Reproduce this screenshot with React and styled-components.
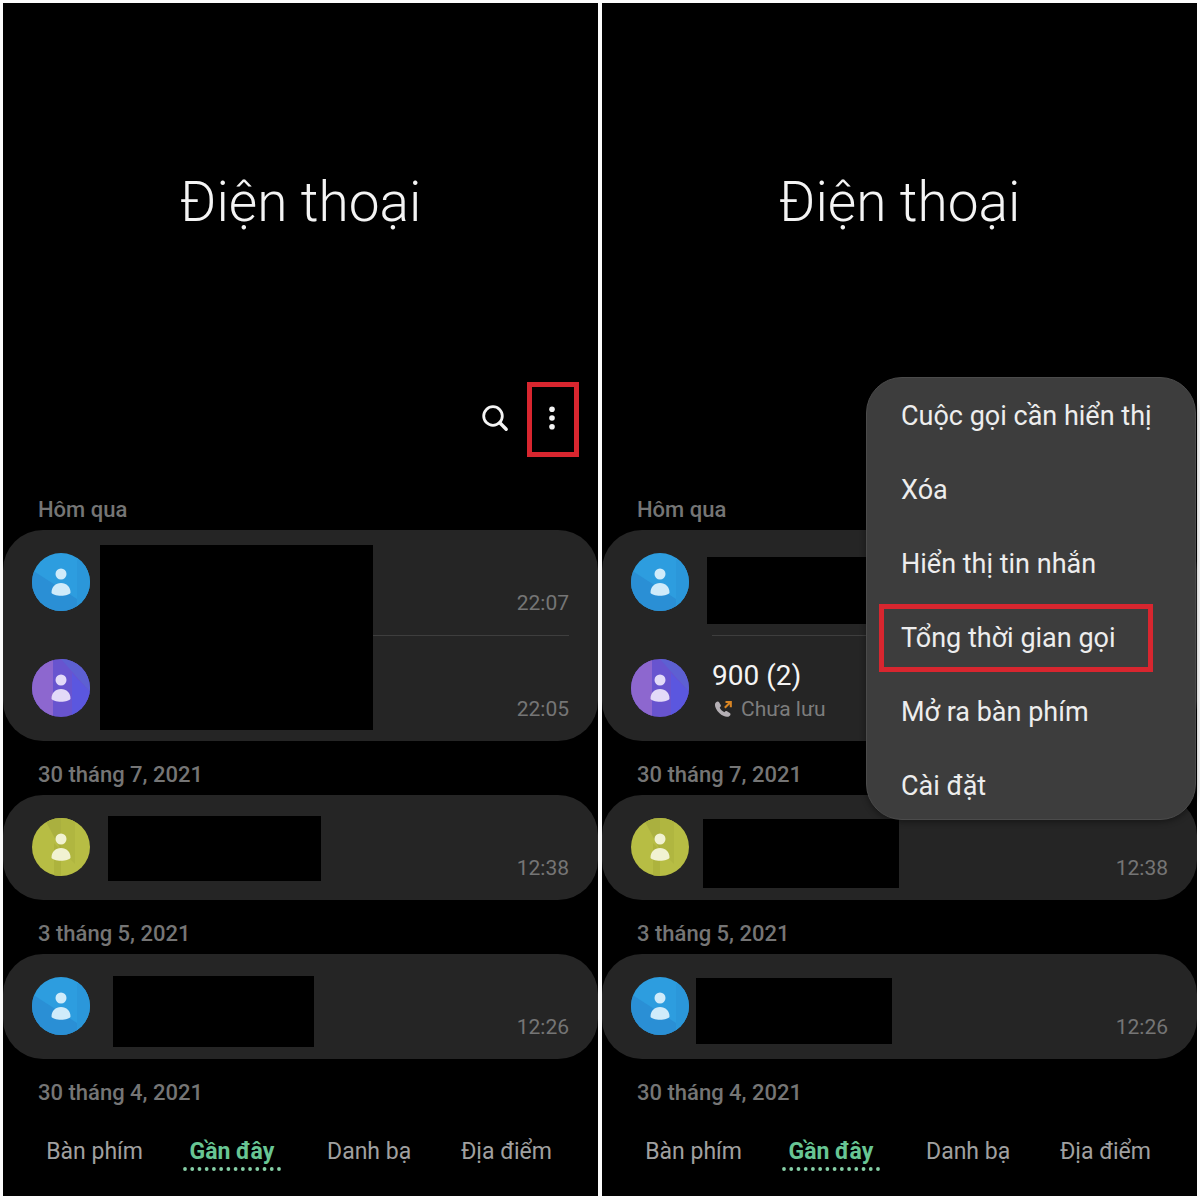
import React from "react";
import styled, { createGlobalStyle, css } from "styled-components";

const GlobalStyle = createGlobalStyle`
  *, *::before, *::after { box-sizing: border-box; }
  body {
    margin: 0;
    background: #fbfbfb;
    font-family: Roboto, "Noto Sans", sans-serif;
  }
  button { font: inherit; color: inherit; background: none; border: 0; padding: 0; cursor: pointer; }
  h1, h2, ul { margin: 0; padding: 0; font-weight: inherit; list-style: none; }
`;

const Comparison = styled.main`
  display: grid;
  grid-template-columns: 1fr 1fr;
  gap: 4px;
  padding: 3px;
`;

const Phone = styled.section`
  position: relative;
  min-width: 0;
  background: #000;
  color: #f4f4f4;
`;

const Title = styled.h1`
  padding-top: 166px;
  font-size: 55px;
  line-height: 66px;
  font-weight: 300;
  text-align: center;
`;

const Toolbar = styled.div`
  display: flex;
  justify-content: flex-end;
  gap: 6px;
  margin-top: 147px;
  padding: 0 19px 19px;
`;

const ToolButton = styled.button`
  display: grid;
  place-items: center;
  width: 52px;
  height: 75px;
  border: 5px solid ${(p) => (p.$marked ? "#d8262f" : "transparent")};
`;

const DateLabel = styled.h2`
  padding: 20px 35px 6px;
  font-size: 22px;
  line-height: 28px;
  font-weight: 500;
  color: #757575;
`;

const Card = styled.ul`
  position: relative;
  border-radius: 40px;
  background: #252525;
`;

const Row = styled.li`
  display: flex;
  align-items: flex-end;
  height: 105px;
  padding: 0 29px 19px;
  gap: 23px;
`;

const Divider = styled.li`
  height: 1px;
  margin: 0 29px 0 110px;
  background: #3e3e3e;
`;

const AvatarArt = styled.svg`
  flex: none;
  width: 58px;
  height: 58px;
  margin-bottom: 5px;
`;

const Name = styled.div`
  font-size: 28px;
  line-height: 34px;
  margin-bottom: 3px;
`;

const Detail = styled.div`
  display: flex;
  align-items: center;
  gap: 8px;
  padding-left: 2px;
  font-size: 21px;
  line-height: 26px;
  color: #7d7d7d;
`;

const Time = styled.time`
  margin-left: auto;
  font-size: 21px;
  line-height: 26px;
  color: #757575;
`;

const Redaction = styled.li`
  position: absolute;
  left: ${(p) => p.$x}px;
  top: ${(p) => p.$y}px;
  width: ${(p) => p.$w}px;
  height: ${(p) => p.$h}px;
  background: #000;
`;

const Tabs = styled.nav`
  display: grid;
  grid-template-columns: repeat(4, 1fr);
  padding: 24px 23px 25px;
`;

const Tab = styled.button`
  display: flex;
  flex-direction: column;
  align-items: center;
  height: 34px;
  font-size: 23px;
  line-height: 30px;
  color: #a0a0a0;
  ${(p) =>
    p.$active &&
    css`
      font-weight: 700;
      color: #68c694;
    `}
`;

const Dots = styled.svg`
  flex: none;
  width: 98px;
  height: 4px;
`;

const Menu = styled.div`
  position: absolute;
  top: 374px;
  right: 1px;
  width: 330px;
  border: 1px solid #4b4b4b;
  border-radius: 36px;
  background: #3d3d3d;
  box-shadow: 0 2px 6px rgba(0, 0, 0, 0.4);
`;

const MenuItem = styled.button`
  position: relative;
  display: block;
  width: 100%;
  padding: 21px 34px 19px;
  text-align: left;
  font-size: 27px;
  line-height: 34px;
  color: #ededed;

  &:last-child {
    padding-bottom: 16px;
  }
`;

const Highlight = styled.span`
  position: absolute;
  inset: 4px 42px 2px 12px;
  border: 5px solid #d8262f;
`;

const palettes = {
  blue: {
    base: "#2d9ddf",
    facets: [
      ["M0 17 45 46V58H0Z", "#2a8fd5"],
      ["M45 0H58V58H45Z", "#2b97da"],
    ],
    figure: "#d0ebfa",
  },
  purple: {
    base: "#6854cf",
    facets: [
      ["M0 0H21V58H0Z", "#8d67cf"],
      ["M29 0H58V33Z", "#5d60d2"],
      ["M58 33 40 14V58H58Z", "#5b57df"],
    ],
    figure: "#e3daf8",
  },
  olive: {
    base: "#b7bd44",
    facets: [
      ["M12 0H29V32Z", "#aab03f"],
      ["M29 0H43V46L29 32Z", "#b0b640"],
      ["M29 32V58H22V25Z", "#adb33d"],
    ],
    figure: "#f1f2d2",
  },
};

function Avatar({ tone }) {
  const { base, facets, figure } = palettes[tone];
  const id = React.useId();
  return (
    <AvatarArt viewBox="0 0 58 58" aria-hidden="true">
      <clipPath id={id}>
        <circle cx="29" cy="29" r="29" />
      </clipPath>
      <g clipPath={`url(#${id})`}>
        <rect width="58" height="58" fill={base} />
        {facets.map(([d, fill]) => (
          <path key={d} d={d} fill={fill} />
        ))}
      </g>
      <circle cx="29" cy="21" r="5.5" fill={figure} />
      <path
        d="M19.5 39.5C19.5 34 23.5 30 29 30S38.5 34 38.5 39.5C38.5 41.3 33.5 42.8 29 42.8S19.5 41.3 19.5 39.5Z"
        fill={figure}
      />
    </AvatarArt>
  );
}

function SearchIcon() {
  return (
    <svg width="28" height="30" viewBox="0 -1 28 30" fill="none" stroke="#f4f4f4" aria-hidden="true">
      <circle cx="12" cy="10" r="9.3" strokeWidth="2.8" />
      <path d="m18.8 16.8 6.4 6.4" strokeWidth="3.4" strokeLinecap="round" />
    </svg>
  );
}

function MoreIcon() {
  return (
    <svg width="10" height="28" viewBox="0 0 10 28" fill="#f4f4f4" aria-hidden="true">
      <circle cx="4" cy="3.2" r="2.8" />
      <circle cx="4" cy="12" r="2.8" />
      <circle cx="4" cy="20.8" r="2.8" />
    </svg>
  );
}

function OutgoingCallIcon() {
  return (
    <svg width="19" height="18" viewBox="0 0 19 18" fill="none" aria-hidden="true">
      <path
        d="M1.8 2.6C3 1.4 4.4 1.3 5.1 2.3L6.7 5C7.3 6 6.3 6.9 5.7 7.6C6.4 9.5 8.2 11.4 10.4 12.2C11.1 11.4 12 10.7 13 11.3L15.8 13C16.9 13.7 16.7 14.9 15.5 16C13.6 17.8 9.1 16.8 5.3 13.1C1.3 9.2-.1 4.8 1.8 2.6Z"
        fill="#b5b0b5"
      />
      <path d="M10.8 7.8 16.6 2M11.5 2H16.8V7.3" stroke="#d88524" strokeWidth="2.1" />
    </svg>
  );
}

function Call({ tone, time, name, detail }) {
  return (
    <Row>
      <Avatar tone={tone} />
      {name && (
        <div>
          <Name>{name}</Name>
          <Detail>
            <OutgoingCallIcon />
            {detail}
          </Detail>
        </div>
      )}
      {time && <Time>{time}</Time>}
    </Row>
  );
}

const menuItems = [
  "Cuộc gọi cần hiển thị",
  "Xóa",
  "Hiển thị tin nhắn",
  "Tổng thời gian gọi",
  "Mở ra bàn phím",
  "Cài đặt",
];

const tabs = ["Bàn phím", "Gần đây", "Danh bạ", "Địa điểm"];

function PhoneScreen({ groups, menuOpen }) {
  return (
    <Phone>
      <Title>Điện thoại</Title>
      <Toolbar>
        <ToolButton aria-label="Tìm kiếm">
          <SearchIcon />
        </ToolButton>
        <ToolButton aria-label="Tùy chọn khác" $marked={!menuOpen}>
          <MoreIcon />
        </ToolButton>
      </Toolbar>
      {groups.map(({ date, calls, cover }) => (
        <React.Fragment key={date}>
          <DateLabel>{date}</DateLabel>
          {calls && (
            <Card>
              {calls.map((call, i) => (
                <React.Fragment key={i}>
                  {i > 0 && <Divider aria-hidden="true" />}
                  <Call {...call} />
                </React.Fragment>
              ))}
              <Redaction aria-hidden="true" $x={cover[0]} $y={cover[1]} $w={cover[2]} $h={cover[3]} />
            </Card>
          )}
        </React.Fragment>
      ))}
      <Tabs>
        {tabs.map((tab, i) => (
          <Tab key={tab} $active={i === 1}>
            {tab}
            {i === 1 && (
              <Dots viewBox="0 0 98 4" fill="#86cfa6" aria-hidden="true">
                {Array.from({ length: 14 }, (_, n) => (
                  <circle key={n} cx={2 + n * 7.23} cy="2" r="1.9" />
                ))}
              </Dots>
            )}
          </Tab>
        ))}
      </Tabs>
      {menuOpen && (
        <Menu>
          {menuItems.map((item, i) => (
            <MenuItem key={item}>
              {item}
              {i === 3 && <Highlight aria-hidden="true" />}
            </MenuItem>
          ))}
        </Menu>
      )}
    </Phone>
  );
}

const before = [
  {
    date: "Hôm qua",
    calls: [
      { tone: "blue", time: "22:07" },
      { tone: "purple", time: "22:05" },
    ],
    cover: [97, 15, 273, 185],
  },
  { date: "30 tháng 7, 2021", calls: [{ tone: "olive", time: "12:38" }], cover: [105, 21, 213, 65] },
  { date: "3 tháng 5, 2021", calls: [{ tone: "blue", time: "12:26" }], cover: [110, 22, 201, 71] },
  { date: "30 tháng 4, 2021" },
];

const after = [
  {
    date: "Hôm qua",
    calls: [{ tone: "blue" }, { tone: "purple", name: "900 (2)", detail: "Chưa lưu" }],
    cover: [105, 27, 159, 67],
  },
  { date: "30 tháng 7, 2021", calls: [{ tone: "olive", time: "12:38" }], cover: [101, 24, 196, 69] },
  { date: "3 tháng 5, 2021", calls: [{ tone: "blue", time: "12:26" }], cover: [94, 24, 196, 66] },
  { date: "30 tháng 4, 2021" },
];

export default function App() {
  return (
    <>
      <GlobalStyle />
      <Comparison>
        <PhoneScreen groups={before} />
        <PhoneScreen groups={after} menuOpen />
      </Comparison>
    </>
  );
}
